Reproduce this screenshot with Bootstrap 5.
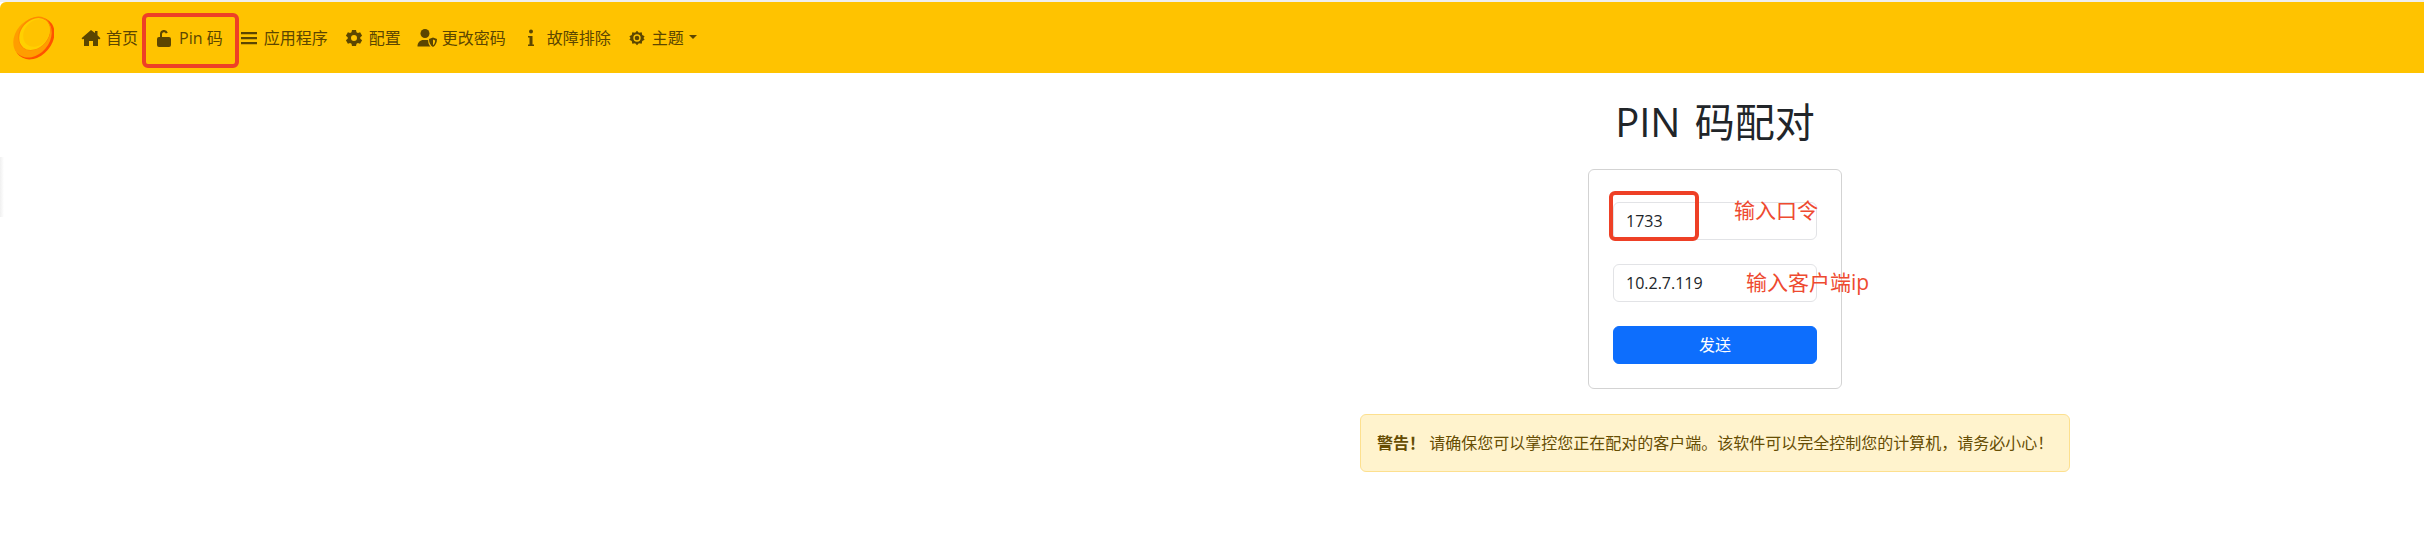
<!DOCTYPE html>
<html lang="zh-CN">
<head>
<meta charset="utf-8">
<title>PIN 码配对</title>
<link href="https://cdn.jsdelivr.net/npm/bootstrap@5.3.0/dist/css/bootstrap.min.css" rel="stylesheet">
<style>
html,body{height:100%;overflow:hidden}
body{font-family:"Open Sans","Noto Sans CJK SC",sans-serif;font-size:16px;background:#fff;position:relative;padding-top:2px;color:#212529}
.top-strip{position:absolute;left:0;right:0;top:0;height:2px;background:#efefef}
.side-shade{position:absolute;left:0;top:157px;width:4px;height:60px;background:linear-gradient(90deg,#f0f0f0,#fff)}
.topbar{height:71px;background:#ffc300;padding:0 0 0 13px;border-top-left-radius:6px;flex-wrap:nowrap}
.topbar .navbar-brand{padding:0;margin:0 19px 0 0;display:flex}
.topbar .nav-link{color:#5c4600;padding:0 8px;display:flex;align-items:center;white-space:nowrap;height:24px;position:relative}
.nav-ico{width:20px;height:18px;margin-right:5px;flex:none;fill:#5c4600}
.topbar .dropdown-toggle::after{margin-left:5px;align-self:center;margin-top:-2px}
.pin-mark{position:absolute;left:-4px;top:-13px;width:97px;height:55px;border:4px solid #ee4026;border-radius:6px;pointer-events:none}
.page-main{padding-left:1006px}
.page-title{font-size:40px;line-height:48px;margin:25px 0 23px;font-weight:400;word-spacing:4px}
.pair-card{width:254px;border-color:#d3d3d3;padding:32px 24px 24px;position:relative}
.pair-card .form-control{height:38px;margin-bottom:24px;border-color:#e2e3e6;color:#212529}
.pair-card .btn{height:38px}
.code-mark{position:absolute;left:20px;top:21px;width:90px;height:50px;border:4px solid #ee4026;border-radius:6px}
.note-red{position:absolute;color:#ee4a30;font-size:21px;line-height:28px;white-space:nowrap}
.note-a{left:145px;top:26px}
.note-b{left:157px;top:98px}
.warn-box{margin-top:25px;margin-bottom:0;padding:16px;width:710px;white-space:nowrap;line-height:24px;color:#664d03;border-color:#fde08f}
</style>
</head>
<body>
<div class="top-strip"></div>
<div class="side-shade"></div>
<nav class="navbar navbar-expand topbar">
  <a class="navbar-brand" href="#" aria-label="Logo">
    <svg width="41" height="44" viewBox="0 0 41 44">
      <ellipse cx="21.500" cy="22.500" rx="23" ry="17.500" transform="rotate(-50 21.500 22.500)" fill="#ff5200"/>
      <ellipse cx="19.500" cy="21.500" rx="22" ry="17" transform="rotate(-50 19.500 21.500)" fill="#ff9d00"/>
      <ellipse cx="21.500" cy="17.500" rx="18.500" ry="14.500" transform="rotate(-50 21.500 17.500)" fill="#ff8a00"/>
      <ellipse cx="21.500" cy="18" rx="17.500" ry="13.500" transform="rotate(-50 21.500 18)" fill="#ffd000"/>
      <ellipse cx="23.500" cy="17" rx="15" ry="12" transform="rotate(-50 23.500 17)" fill="#ffc300"/>
    </svg>
  </a>
  <ul class="navbar-nav flex-row">
    <li class="nav-item"><a class="nav-link" href="#"><svg class="nav-ico" viewBox="0 0 20 18"><path d="M10 1 0.500 9.200 1.900 10.600 3 9.700V17h5v-5h4v5h5V9.700l1.100.9 1.400-1.400L16.500 6.200V2h-2.500v2.100z"/></svg>首页</a></li>
    <li class="nav-item"><a class="nav-link" href="#"><svg class="nav-ico" viewBox="0 0 20 18"><path d="M6 8V5a4 4 0 0 1 7.800-1.200l-2 .7A2 2 0 0 0 8 5v3h7a2 2 0 0 1 2 2v6a2 2 0 0 1-2 2H5a2 2 0 0 1-2-2v-6a2 2 0 0 1 2-2z"/></svg>Pin 码<span class="pin-mark"></span></a></li>
    <li class="nav-item"><a class="nav-link" href="#"><svg class="nav-ico" viewBox="0 0 20 18"><path d="M2 3h16v2.200H2zM2 8h16v2.200H2zM2 13h16v2.200H2z"/></svg>应用程序</a></li>
    <li class="nav-item"><a class="nav-link" href="#"><svg class="nav-ico" viewBox="0 0 20 18"><path fill-rule="evenodd" d="M8 1h4l.5 2.300 1.400.8 2.200-.8 2 3.400-1.800 1.500v1.600l1.800 1.500-2 3.400-2.200-.8-1.400.8L12 17H8l-.5-2.300-1.400-.8-2.200.8-2-3.400 1.800-1.500V8.200L1.900 6.700l2-3.400 2.200.8 1.400-.8zM10 6a3 3 0 1 0 0 6 3 3 0 0 0 0-6z"/></svg>配置</a></li>
    <li class="nav-item"><a class="nav-link" href="#"><svg class="nav-ico" viewBox="0 0 20 18"><circle cx="8" cy="4.500" r="4.500"/><path d="M0.500 17.500c0-4 2.500-6.500 6-6.500h3c.6 0 1.200.1 1.700.2-.1 2.500.6 4.800 2.300 6.300z"/><path fill-rule="evenodd" d="M16 8.500l4 1.500c0 3.800-1.500 6.500-4 8-2.500-1.500-4-4.200-4-8zm0 2v5.800c1.300-1 2.100-2.700 2.200-4.900z"/></svg>更改密码</a></li>
    <li class="nav-item"><a class="nav-link" href="#"><svg class="nav-ico" viewBox="0 0 20 18"><circle cx="9" cy="2.500" r="2"/><path d="M6 7h4.500v8.500H12V17H6v-1.500h1.500V8.500H6z"/></svg>故障排除</a></li>
    <li class="nav-item dropdown"><a class="nav-link dropdown-toggle" href="#" role="button"><svg class="nav-ico" viewBox="-2 -2 24 22"><path fill-rule="evenodd" d="M10 0l2.300 2.600 3.400-.7.700 3.400 2.900 1.700-1.400 2 1.400 2-2.900 1.700-.7 3.400-3.400-.7L10 18l-2.300-2.600-3.400.7-.7-3.400L.7 11l1.400-2L.7 7l2.900-1.700.7-3.400 3.400.7zM10 4.500a4.500 4.500 0 1 0 0 9 4.500 4.500 0 0 0 0-9z"/><circle cx="10" cy="9" r="2.800"/></svg>主题</a></li>
  </ul>
</nav>
<main class="page-main d-flex flex-column align-items-center">
  <h1 class="page-title">PIN 码配对</h1>
  <form class="card pair-card">
    <input class="form-control" type="text" value="1733" aria-label="PIN">
    <input class="form-control" type="text" value="10.2.7.119" aria-label="IP">
    <button class="btn btn-primary" type="button">发送</button>
    <span class="code-mark"></span>
    <span class="note-red note-a">输入口令</span>
    <span class="note-red note-b">输入客户端ip</span>
  </form>
  <div class="alert alert-warning warn-box" role="alert"><strong>警告！</strong> 请确保您可以掌控您正在配对的客户端。该软件可以完全控制您的计算机，请务必小心！</div>
</main>
<script src="https://cdn.jsdelivr.net/npm/bootstrap@5.3.0/dist/js/bootstrap.bundle.min.js"></script>
</body>
</html>
